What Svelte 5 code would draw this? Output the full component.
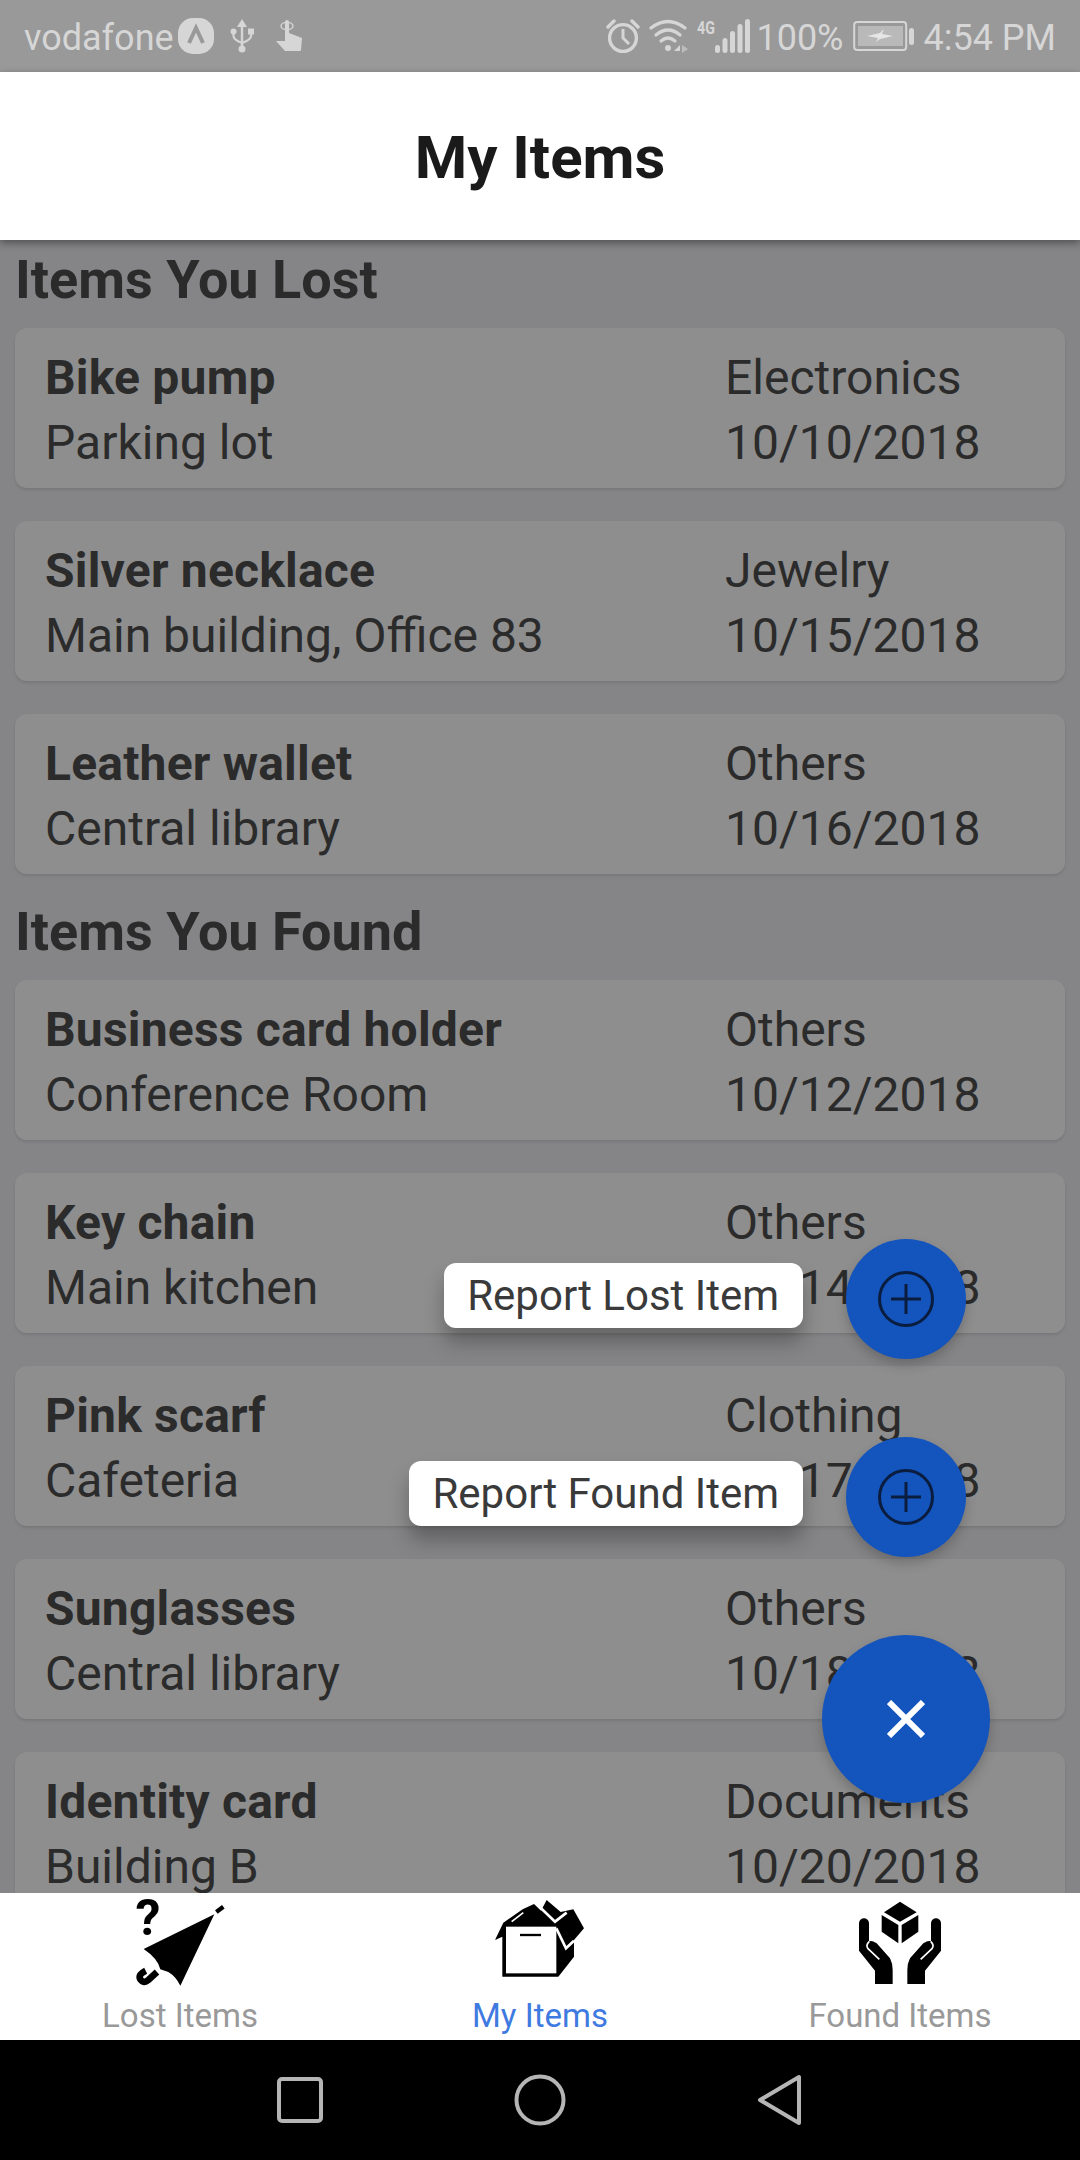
<script>
  const lost = [
    { name: 'Bike pump', place: 'Parking lot', category: 'Electronics', date: '10/10/2018' },
    { name: 'Silver necklace', place: 'Main building, Office 83', category: 'Jewelry', date: '10/15/2018' },
    { name: 'Leather wallet', place: 'Central library', category: 'Others', date: '10/16/2018' }
  ];
  const found = [
    { name: 'Business card holder', place: 'Conference Room', category: 'Others', date: '10/12/2018' },
    { name: 'Key chain', place: 'Main kitchen', category: 'Others', date: '10/14/2018' },
    { name: 'Pink scarf', place: 'Cafeteria', category: 'Clothing', date: '10/17/2018' },
    { name: 'Sunglasses', place: 'Central library', category: 'Others', date: '10/18/2018' },
    { name: 'Identity card', place: 'Building B', category: 'Documents', date: '10/20/2018' }
  ];
  const sections = [
    { title: 'Items You Lost', items: lost },
    { title: 'Items You Found', items: found }
  ];
</script>

<div class="phone">
  <div class="status">
    <div class="status-left">
      <span>vodafone</span>
      <svg class="ic-v" width="36" height="36" viewBox="0 0 36 36">
        <rect width="36" height="36" rx="15" fill="#d6d6d6" />
        <path d="M11 25 L18 10 L25 25" fill="none" stroke="#999" stroke-width="4" />
      </svg>
      <svg class="ic-usb" width="24" height="36" viewBox="0 0 24 36" fill="#d6d6d6">
        <path d="M12 1 L17 9 H7 Z" />
        <rect x="10.8" y="8" width="2.4" height="24" />
        <circle cx="12" cy="31" r="3.5" />
        <circle cx="3.5" cy="13.5" r="3" />
        <rect x="18" y="10.5" width="6" height="6" />
        <path d="M3.5 14 V18 Q3.5 22 12 25 Q21 22 21 18 V14" fill="none" stroke="#d6d6d6" stroke-width="2.2" />
      </svg>
      <svg class="ic-touch" width="28" height="32" viewBox="0 0 28 32" fill="#d6d6d6">
        <rect x="10" y="0" width="4" height="16" rx="2" />
        <ellipse cx="12" cy="6" rx="6" ry="3.6" fill="none" stroke="#d6d6d6" stroke-width="1.4" />
        <path d="M10 13 H14 L27 18 L26 30 Q26 31 25 31 H10 L1 21 H10 Z" />
      </svg>
    </div>
    <div class="status-right">
      <svg width="34" height="36" viewBox="0 0 34 36" fill="none" stroke="#d6d6d6" stroke-width="3.4">
        <circle cx="17" cy="20" r="13.4" />
        <path d="M17 11 V20 L23 26" stroke-width="3" />
        <path d="M2 9 L8 3 M32 9 L26 3" stroke-linecap="round" />
      </svg>
      <svg class="ic-wifi" width="40" height="36" viewBox="0 0 40 36" fill="none" stroke="#d6d6d6" stroke-width="3.2" stroke-linecap="round">
        <path d="M2 10 Q19 -3 36 10" />
        <path d="M7 17 Q19 7 31 17" />
        <path d="M12 23 Q19 17 26 23" />
        <circle cx="19" cy="30" r="3" fill="#d6d6d6" stroke="none" />
        <path d="M25 33 L31 27 V33 Z" fill="#d6d6d6" stroke="none" />
        <path d="M33 27 L39 31 L33 35 Z" fill="#bdbdbd" stroke="none" />
      </svg>
      <span class="net">4G</span>
      <svg class="ic-signal" width="35" height="36" viewBox="0 0 35 36" fill="#d6d6d6">
        <rect x="0" y="27" width="5" height="8" rx="2.5" />
        <rect x="7.5" y="20" width="5" height="15" rx="2.5" />
        <rect x="15" y="13" width="5" height="22" rx="2.5" />
        <rect x="22.5" y="6" width="5" height="29" rx="2.5" />
        <rect x="30" y="1" width="5" height="34" rx="2.5" />
      </svg>
      <span class="pct">100%</span>
      <svg class="ic-batt" width="61" height="32" viewBox="0 0 61 32">
        <rect x="1.2" y="2" width="52" height="28" rx="3" fill="none" stroke="#d6d6d6" stroke-width="2" />
        <rect x="5" y="6" width="45" height="20" fill="#b9b9b9" />
        <rect x="56" y="8" width="5" height="17" rx="2.5" fill="#d6d6d6" />
        <path d="M14 16 L27 13 L31 9 L29 14 L40 16 L27 19 L23 22 L25 18 Z" fill="#e6e6e6" />
      </svg>
      <span class="time">4:54 PM</span>
    </div>
  </div>

  <header class="topbar">My Items</header>

  <main class="content">
    {#each sections as section}
      <section>
        <h2>{section.title}</h2>
        {#each section.items as item}
          <div class="card">
            <div>
              <div class="name">{item.name}</div>
              <div>{item.place}</div>
            </div>
            <div>
              <div>{item.category}</div>
              <div>{item.date}</div>
            </div>
          </div>
        {/each}
      </section>
    {/each}

    <div class="fabs">
      <div class="fab-row">
        <span class="fab-label">Report Lost Item</span>
        <div class="fab small">
          <svg width="58" height="58" viewBox="0 0 58 58" fill="none" stroke="#0a1d3e" stroke-width="3">
            <circle cx="29" cy="29" r="26.5" />
            <path d="M14 29 H44 M29 14 V44" />
          </svg>
        </div>
      </div>
      <div class="fab-row">
        <span class="fab-label">Report Found Item</span>
        <div class="fab small">
          <svg width="58" height="58" viewBox="0 0 58 58" fill="none" stroke="#0a1d3e" stroke-width="3">
            <circle cx="29" cy="29" r="26.5" />
            <path d="M14 29 H44 M29 14 V44" />
          </svg>
        </div>
      </div>
      <div class="fab main">
        <svg width="38" height="38" viewBox="0 0 38 38" stroke="#fff" stroke-width="6">
          <path d="M2 2 L36 36 M36 2 L2 36" />
        </svg>
      </div>
    </div>
  </main>

  <nav class="tabs">
    <div class="tab">
      <svg width="90" height="90" viewBox="222 51 270 270">
        <text x="261" y="165" text-anchor="middle" class="q">?</text>
        <path d="M248 207 L460 103 L358 317 Q345 290 322 276 L298 268 Q290 235 248 207 Z" />
        <path d="M466 96 L487 80" fill="none" stroke="#000" stroke-width="13" />
        <path d="M288 276 L262 300 Q248 312 238 298 Q230 284 254 272" fill="none" stroke="#000" stroke-width="20" />
      </svg>
      <span>Lost Items</span>
    </div>
    <div class="tab active">
      <svg width="90" height="90" viewBox="165 51 270 270">
        <path d="M165 180 L190 128 L248 88 L282 72 L303 92 L320 60 L362 96 L400 88 L432 145 L402 180 V230 L355 290 H187 V170 Z" />
        <rect x="198" y="140" width="151" height="140" fill="#fff" />
        <path d="M240 165 H303" stroke="#000" stroke-width="7" />
        <path d="M300 82 L345 125 L380 98 M349 145 L378 205 L402 182" fill="none" stroke="#fff" stroke-width="8" />
        <path d="M215 125 L250 98" stroke="#fff" stroke-width="5" />
      </svg>
      <span>My Items</span>
    </div>
    <div class="tab">
      <svg width="90" height="90" viewBox="225 51 270 270">
        <path d="M360 65 L410 97 L360 125 L312 97 Z" />
        <path d="M305 105 L355 135 V190 L305 155 Z" />
        <path d="M415 105 L365 135 V190 L415 155 Z" />
        <path d="M237 130 A15 15 0 0 1 267 130 V184 Q275 180 290 190 L330 235 Q338 250 338 270 V312 H285 V272 L237 212 Z" />
        <path d="M268 184 Q256 196 264 206 L298 238" fill="none" stroke="#fff" stroke-width="5" />
        <g transform="matrix(-1 0 0 1 720 0)">
          <path d="M237 130 A15 15 0 0 1 267 130 V184 Q275 180 290 190 L330 235 Q338 250 338 270 V312 H285 V272 L237 212 Z" />
          <path d="M268 184 Q256 196 264 206 L298 238" fill="none" stroke="#fff" stroke-width="5" />
        </g>
      </svg>
      <span>Found Items</span>
    </div>
  </nav>

  <div class="softkeys">
    <div class="key">
      <svg width="46" height="46" viewBox="0 0 46 46" fill="none" stroke="#b5b5b5" stroke-width="4">
        <rect x="2" y="2" width="42" height="42" rx="3" />
      </svg>
    </div>
    <div class="key">
      <svg width="52" height="52" viewBox="0 0 52 52" fill="none" stroke="#b5b5b5" stroke-width="4">
        <circle cx="26" cy="26" r="23.5" />
      </svg>
    </div>
    <div class="key">
      <svg width="46" height="52" viewBox="0 0 46 52" fill="none" stroke="#b5b5b5" stroke-width="4" stroke-linejoin="round">
        <path d="M3 26 L42 3 V49 Z" />
      </svg>
    </div>
  </div>
</div>

<style>
  :global(body) {
    margin: 0;
    font-family: Roboto, "Liberation Sans", sans-serif;
  }

  .phone {
    width: 1080px;
    height: 2160px;
    display: flex;
    flex-direction: column;
    overflow: hidden;
  }

  .status {
    height: 72px;
    background: #999;
    color: #d6d6d6;
    font-size: 36px;
    display: flex;
    justify-content: space-between;
    align-items: center;
    padding: 3px 25px 0 24px;
    box-sizing: border-box;
    flex: none;
  }

  .status-left,
  .status-right {
    display: flex;
    align-items: center;
  }

  .status svg {
    margin-top: -3px;
  }

  .ic-v {
    margin-left: 4px;
  }

  .ic-usb {
    margin-left: 16px;
  }

  .ic-touch {
    margin-left: 21px;
  }

  .status-right {
    position: relative;
    left: 1px;
  }

  .ic-wifi {
    margin-left: 9px;
  }

  .net {
    font-size: 19px;
    font-weight: 700;
    width: 18px;
    margin-left: 8px;
    align-self: flex-start;
    line-height: 20px;
    margin-top: 1px;
    transform: scaleX(0.75);
    transform-origin: left center;
  }

  .pct {
    margin-left: 6px;
  }

  .ic-batt {
    margin-left: 9px;
  }

  .time {
    margin-left: 10px;
  }

  .topbar {
    height: 168px;
    background: #fff;
    color: #1a1a1a;
    font-size: 60px;
    font-weight: 700;
    display: flex;
    align-items: center;
    justify-content: center;
    padding-top: 3px;
    box-sizing: border-box;
    box-shadow: 0 3px 8px rgba(0, 0, 0, 0.4);
    position: relative;
    z-index: 1;
    flex: none;
  }

  .content {
    flex: 1;
    min-height: 0;
    background: #858587;
    color: #2b2b2b;
    font-size: 48px;
    position: relative;
    overflow: hidden;
  }

  section + section {
    margin-top: -15px;
  }

  h2 {
    margin: 0;
    height: 88px;
    line-height: 80px;
    padding-left: 15px;
    font-size: 54px;
    font-weight: 700;
  }

  .card {
    height: 160px;
    margin: 0 15px 33px;
    padding: 17px 30px 0;
    box-sizing: border-box;
    background: #8e8e8e;
    border-radius: 12px;
    box-shadow: 0 2px 3px rgba(0, 0, 0, 0.1);
    display: grid;
    grid-template-columns: 1fr 310px;
    line-height: 65px;
  }

  .name {
    font-weight: 700;
    letter-spacing: 0.2px;
  }

  .fabs {
    position: absolute;
    right: 90px;
    bottom: 90px;
    display: flex;
    flex-direction: column;
    align-items: flex-end;
    gap: 78px;
  }

  .fab-row {
    display: flex;
    align-items: center;
    gap: 43px;
    padding-right: 24px;
  }

  .fab-label {
    background: #fff;
    color: #3a3a3a;
    font-size: 42px;
    height: 65px;
    line-height: 65px;
    padding: 0 24px 0 23px;
    border-radius: 12px;
    box-shadow: 0 14px 20px rgba(0, 0, 0, 0.28);
    margin-bottom: 8px;
  }

  .fab {
    background: #1454bd;
    border-radius: 50%;
    display: flex;
    align-items: center;
    justify-content: center;
    box-shadow: 0 6px 12px rgba(0, 0, 0, 0.2);
  }

  .small {
    width: 120px;
    height: 120px;
  }

  .main {
    width: 168px;
    height: 168px;
  }

  .tabs {
    height: 147px;
    background: #fff;
    display: grid;
    grid-template-columns: repeat(3, 1fr);
    flex: none;
    position: relative;
  }

  .tab {
    display: flex;
    flex-direction: column;
    align-items: center;
    padding-top: 4px;
    color: #999;
    font-size: 33px;
  }

  .tab span {
    line-height: 40px;
    margin-top: 9px;
  }

  .active {
    color: #3f7ae0;
  }

  .q {
    font-size: 150px;
    font-weight: 700;
  }

  .softkeys {
    height: 120px;
    background: #000;
    display: flex;
    justify-content: center;
    flex: none;
  }

  .key {
    width: 240px;
    display: flex;
    align-items: center;
    justify-content: center;
  }
</style>
